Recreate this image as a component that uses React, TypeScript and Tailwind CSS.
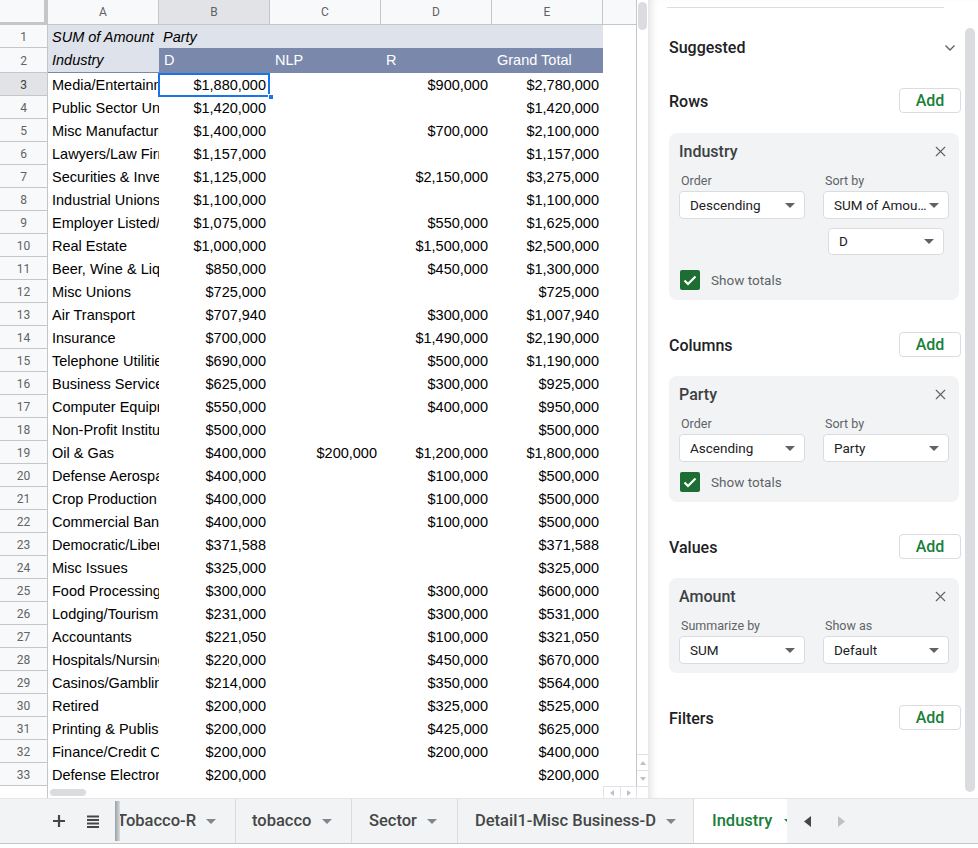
import { X } from "lucide-react";

type Row = [string, string, string, string, string];

const rows: Row[] = [
  ["Media/Entertainment", "$1,880,000", "", "$900,000", "$2,780,000"],
  ["Public Sector Unions", "$1,420,000", "", "", "$1,420,000"],
  ["Misc Manufacturing", "$1,400,000", "", "$700,000", "$2,100,000"],
  ["Lawyers/Law Firms", "$1,157,000", "", "", "$1,157,000"],
  ["Securities & Investment", "$1,125,000", "", "$2,150,000", "$3,275,000"],
  ["Industrial Unions", "$1,100,000", "", "", "$1,100,000"],
  ["Employer Listed/Category Unknown", "$1,075,000", "", "$550,000", "$1,625,000"],
  ["Real Estate", "$1,000,000", "", "$1,500,000", "$2,500,000"],
  ["Beer, Wine & Liquor", "$850,000", "", "$450,000", "$1,300,000"],
  ["Misc Unions", "$725,000", "", "", "$725,000"],
  ["Air Transport", "$707,940", "", "$300,000", "$1,007,940"],
  ["Insurance", "$700,000", "", "$1,490,000", "$2,190,000"],
  ["Telephone Utilities", "$690,000", "", "$500,000", "$1,190,000"],
  ["Business Services", "$625,000", "", "$300,000", "$925,000"],
  ["Computer Equipment", "$550,000", "", "$400,000", "$950,000"],
  ["Non-Profit Institutions", "$500,000", "", "", "$500,000"],
  ["Oil & Gas", "$400,000", "$200,000", "$1,200,000", "$1,800,000"],
  ["Defense Aerospace", "$400,000", "", "$100,000", "$500,000"],
  ["Crop Production", "$400,000", "", "$100,000", "$500,000"],
  ["Commercial Banks", "$400,000", "", "$100,000", "$500,000"],
  ["Democratic/Liberal", "$371,588", "", "", "$371,588"],
  ["Misc Issues", "$325,000", "", "", "$325,000"],
  ["Food Processing", "$300,000", "", "$300,000", "$600,000"],
  ["Lodging/Tourism", "$231,000", "", "$300,000", "$531,000"],
  ["Accountants", "$221,050", "", "$100,000", "$321,050"],
  ["Hospitals/Nursing Homes", "$220,000", "", "$450,000", "$670,000"],
  ["Casinos/Gambling", "$214,000", "", "$350,000", "$564,000"],
  ["Retired", "$200,000", "", "$325,000", "$525,000"],
  ["Printing & Publishing", "$200,000", "", "$425,000", "$625,000"],
  ["Finance/Credit Companies", "$200,000", "", "$200,000", "$400,000"],
  ["Defense Electronics", "$200,000", "", "", "$200,000"],
];

function Caret({ className = "" }: { className?: string }) {
  return (
    <svg width="10" height="5" viewBox="0 0 10 5" className={className}>
      <path d="M0 0h10L5 5z" fill="currentColor" />
    </svg>
  );
}

function RowHead({ n, active = false, h = "h-[23px]" }: { n: number; active?: boolean; h?: string }) {
  return (
    <div
      className={`${h} w-[48px] shrink-0 border-r border-b border-[#c4c7c5] pt-[2px] flex items-center justify-center text-[12px] font-['Roboto',sans-serif] ${
        active ? "bg-[#e1e3e6] text-[#3c4043]" : "bg-[#f8f9fa] text-[#5f6368]"
      }`}
    >
      {n}
    </div>
  );
}

function Sheet() {
  const cols = ["A", "B", "C", "D", "E"];
  return (
    <div className="flex w-[648px] flex-col">
      <div className="flex h-[786px]">
        <div className="flex w-[636px] flex-col font-['Liberation_Sans',Arial,sans-serif] text-[14.5px] text-black">
          {/* column letters */}
          <div className="flex h-[25px]">
            <div className="w-[48px] h-[25px] bg-[#f8f9fa] border-r-[4px] border-b-[3px] border-[#c4c7c5]" />
            {cols.map((c) => (
              <div
                key={c}
                className={`w-[111px] h-[25px] border-r border-b border-[#c4c7c5] flex items-center justify-center text-[12px] text-[#5f6368] font-['Roboto',sans-serif] ${
                  c === "B" ? "bg-[#e1e3e6]" : "bg-[#f8f9fa]"
                }`}
              >
                {c}
              </div>
            ))}
            <div className="w-[33px] h-[25px] border-b border-[#c4c7c5] bg-[#f8f9fa]" />
          </div>

          {/* pivot header rows */}
          <div className="flex h-[23px]">
            <RowHead n={1} />
            <div className="flex w-[555px] bg-[#dee2ea] italic pt-[2px]">
              <div className="w-[111px] pl-[4px] flex items-center whitespace-nowrap">SUM of Amount</div>
              <div className="w-[111px] pl-[4px] flex items-center">Party</div>
            </div>
          </div>
          <div className="flex h-[25px]">
            <RowHead n={2} h="h-[25px]" />
            <div className="flex w-[555px] border-b border-[#7a89ab]">
              <div className="w-[111px] pl-[4px] pt-[1px] flex items-center bg-[#dee2ea] italic">Industry</div>
              {["D", "NLP", "R", "Grand Total"].map((t) => (
                <div key={t} className="w-[111px] pl-[5px] pt-[1px] flex items-center bg-[#7a89ab] text-white">
                  {t}
                </div>
              ))}
            </div>
          </div>

          {/* data rows */}
          {rows.map((r, i) => (
            <div key={i} className="flex h-[23px]">
              <RowHead n={i + 3} active={i === 0} />
              <div className="w-[111px] pl-[4px] pt-[2px] flex items-center overflow-hidden whitespace-nowrap">{r[0]}</div>
              {r.slice(1).map((v, j) => (
                <div key={j} className="relative w-[111px] pr-[4px] pt-[2px] flex items-center justify-end whitespace-nowrap">
                  {v}
                  {i === 0 && j === 0 && (
                    <>
                      <div className="absolute -left-px top-0 h-[24px] w-[112px] border-2 border-[#1a73e8]" />
                      <div className="absolute -right-[4px] -bottom-[4px] h-[6px] w-[6px] bg-[#1a73e8] border border-white" />
                    </>
                  )}
                </div>
              ))}
            </div>
          ))}
        </div>

        {/* vertical scrollbar */}
        <div className="flex w-[12px] flex-col justify-between border-l border-[#c4c7c5] bg-white">
          <div className="ml-[1px] mt-[2px] h-[28px] w-[9px] rounded-full bg-[#dadce0]" />
          <div className="flex flex-col">
            <div className="h-[16px] border-t border-[#e0e2e5] flex items-center justify-center text-[#bdc1c6]">
              <svg width="6" height="4" viewBox="0 0 6 4"><path d="M0 4L3 0l3 4z" fill="currentColor" /></svg>
            </div>
            <div className="h-[16px] border-t border-[#e0e2e5] flex items-center justify-center text-[#bdc1c6]">
              <svg width="6" height="4" viewBox="0 0 6 4"><path d="M0 0h6L3 4z" fill="currentColor" /></svg>
            </div>
          </div>
        </div>
      </div>

      {/* horizontal scrollbar */}
      <div className="flex h-[12px] bg-white">
        <div className="w-[48px] h-full border-r border-[#c4c7c5]" />
        <div className="ml-[2px] mt-[3px] h-[7px] w-[36px] rounded-full bg-[#dadce0]" />
        <div className="flex-1" />
        <div className="w-[17px] h-full border-l border-t border-[#e0e2e5] flex items-center justify-center text-[#bdc1c6]">
          <svg width="4" height="6" viewBox="0 0 4 6"><path d="M4 0v6L0 3z" fill="currentColor" /></svg>
        </div>
        <div className="w-[16px] h-full border-l border-t border-[#e0e2e5] flex items-center justify-center text-[#bdc1c6]">
          <svg width="4" height="6" viewBox="0 0 4 6"><path d="M0 0v6l4-3z" fill="currentColor" /></svg>
        </div>
        <div className="w-[12px] h-full border-l border-t border-[#e0e2e5]" />
      </div>
    </div>
  );
}

function Select({ label, className = "" }: { label: string; className?: string }) {
  return (
    <div
      className={`flex items-center justify-between rounded-[4px] border border-[#dadce0] bg-white pl-[10px] pr-[9px] text-[13.5px] text-[#202124] whitespace-nowrap ${className}`}
    >
      <span>{label}</span>
      <Caret className="text-[#5f6368]" />
    </div>
  );
}

function SectionHeader({ title, className = "" }: { title: string; className?: string }) {
  return (
    <div className={`flex h-[25px] items-center justify-between ${className}`}>
      <span className="pt-[3px] text-[16px] font-medium text-[#202124]">{title}</span>
      <button className="flex h-[25px] w-[62px] items-center justify-center rounded-[4px] border border-[#dadce0] bg-white text-[16px] font-medium text-[#188038]">
        Add
      </button>
    </div>
  );
}

function CheckRow({ className = "" }: { className?: string }) {
  return (
    <div className={`flex h-[20px] items-center ${className}`}>
      <div className="ml-[1px] flex h-[20px] w-[20px] items-center justify-center rounded-[2px] bg-[#1e6e34]">
        <svg width="14" height="11" viewBox="0 0 14 11">
          <path d="M1.5 5.5l3.5 3.5 7.5-7.5" stroke="white" strokeWidth="2.2" fill="none" />
        </svg>
      </div>
      <span className="ml-[11px] text-[13.5px] text-[#5f6368]">Show totals</span>
    </div>
  );
}

function Card({
  title,
  labels,
  values,
  className = "",
  children,
}: {
  title: string;
  labels: [string, string];
  values: [string, string];
  className?: string;
  children?: React.ReactNode;
}) {
  return (
    <div className={`mr-[2px] rounded-[8px] bg-[#f1f3f4] px-[10px] pt-[8px] ${className}`}>
      <div className="flex h-[20px] items-center justify-between">
        <span className="pt-[1px] text-[16px] font-medium text-[#3c4043]">{title}</span>
        <X size={17} strokeWidth={1.6} className="text-[#5f6368]" />
      </div>
      <div className="mt-[12px] grid grid-cols-2 gap-x-[18px]">
        <div className="h-[16px] pl-[2px] text-[12.5px] leading-[16px] text-[#5f6368]">{labels[0]}</div>
        <div className="h-[16px] pl-[2px] text-[12.5px] leading-[16px] text-[#5f6368]">{labels[1]}</div>
        <Select label={values[0]} className="mt-[2px] h-[28px]" />
        <Select label={values[1]} className="mt-[2px] h-[28px]" />
      </div>
      {children}
    </div>
  );
}

function Panel() {
  return (
    <div className="flex h-[798px] w-[330px] bg-white font-['Roboto',sans-serif] shadow-[inset_8px_0_8px_-6px_rgba(60,64,67,0.18)]">
      <div className="flex-1 pl-[21px]">
        <div className="h-[7px]" />
        <div className="-ml-[2px] mr-[17px] h-px bg-[#dadce0]" />
        <div className="mt-[27px] flex h-[25px] items-center justify-between">
          <span className="text-[16px] font-medium text-[#202124]">Suggested</span>
          <svg width="12" height="8" viewBox="0 0 12 8" className="mr-[5px]">
            <path d="M1.5 1.5L6 6l4.5-4.5" stroke="#5f6368" strokeWidth="1.4" fill="none" />
          </svg>
        </div>

        <SectionHeader title="Rows" className="mt-[28px]" />
        <Card
          title="Industry"
          labels={["Order", "Sort by"]}
          values={["Descending", "SUM of Amou…"]}
          className="mt-[20px] pb-[10px]"
        >
          <div className="grid grid-cols-2 gap-x-[18px]">
            <div />
            <Select label="D" className="mx-[5px] mt-[9px] h-[27px]" />
          </div>
          <CheckRow className="mt-[15px]" />
        </Card>

        <SectionHeader title="Columns" className="mt-[32px]" />
        <Card
          title="Party"
          labels={["Order", "Sort by"]}
          values={["Ascending", "Party"]}
          className="mt-[19px] pb-[10px]"
        >
          <CheckRow className="mt-[10px]" />
        </Card>

        <SectionHeader title="Values" className="mt-[32px]" />
        <Card
          title="Amount"
          labels={["Summarize by", "Show as"]}
          values={["SUM", "Default"]}
          className="mt-[19px] pb-[9px]"
        />

        <SectionHeader title="Filters" className="mt-[32px]" />
      </div>
      <div className="w-[17px] pl-[4px] pt-[28px]">
        <div className="h-[764px] w-[10px] rounded-full bg-[#dadce0]" />
      </div>
    </div>
  );
}

function Tab({
  label,
  w,
  pl,
  pr,
}: {
  label: string;
  w: string;
  pl: string;
  pr: string;
}) {
  return (
    <div
      className={`flex h-full shrink-0 items-center justify-between overflow-hidden whitespace-nowrap border-r border-[#dadce0] text-[#444746] ${w} ${pl} ${pr}`}
    >
      <span className="text-[16.5px] font-medium">{label}</span>
      <Caret className="ml-[10px] shrink-0 text-[#80868b]" />
    </div>
  );
}

function TabBar() {
  return (
    <div className="flex h-[46px] items-stretch border-t border-[#e3e5e8] border-b border-b-[#c4c7c5] bg-[#f1f3f4] font-['Roboto',sans-serif]">
      <div className="ml-[52px] flex items-center">
        <svg width="14" height="14" viewBox="0 0 14 14">
          <path d="M7 1v12M1 7h12" stroke="#444746" strokeWidth="2.2" />
        </svg>
      </div>
      <div className="ml-[20px] flex items-center">
        <svg width="14" height="13" viewBox="0 0 14 13">
          <path d="M1 1.5h12M1 5h12M1 8.5h12M1 12h12" stroke="#444746" strokeWidth="1.8" />
        </svg>
      </div>
      <div className="relative ml-[15px] flex h-full">
        <Tab label="Tobacco-R" w="w-[121px]" pl="pl-[2px]" pr="pr-[21px]" />
        <div className="absolute left-0 top-[2px] bottom-[2px] w-[5px] bg-gradient-to-r from-[#9aa0a6] to-[#dadce0]" />
      </div>
      <Tab label="tobacco" w="w-[116px]" pl="pl-[16px]" pr="pr-[19px]" />
      <Tab label="Sector" w="w-[106px]" pl="pl-[17px]" pr="pr-[20px]" />
      <Tab label="Detail1-Misc Business-D" w="w-[236px]" pl="pl-[17px]" pr="pr-[17px]" />
      <div className="flex h-full w-[93px] shrink-0 items-center overflow-hidden whitespace-nowrap bg-white pl-[18px] text-[#188038]">
        <span className="text-[16.5px] font-medium">Industry</span>
        <Caret className="ml-[12px] shrink-0 text-[#188038]" />
      </div>
      <div className="ml-[17px] flex items-center">
        <svg width="7" height="11" viewBox="0 0 7 11"><path d="M7 0v11L0 5.5z" fill="#444746" /></svg>
      </div>
      <div className="ml-[27px] flex items-center">
        <svg width="7" height="11" viewBox="0 0 7 11"><path d="M0 0v11l7-5.5z" fill="#bdc1c6" /></svg>
      </div>
    </div>
  );
}

export default function App() {
  return (
    <div className="flex h-[848px] w-[978px] flex-col overflow-hidden bg-white">
      <div className="flex h-[798px]">
        <Sheet />
        <Panel />
      </div>
      <TabBar />
    </div>
  );
}
